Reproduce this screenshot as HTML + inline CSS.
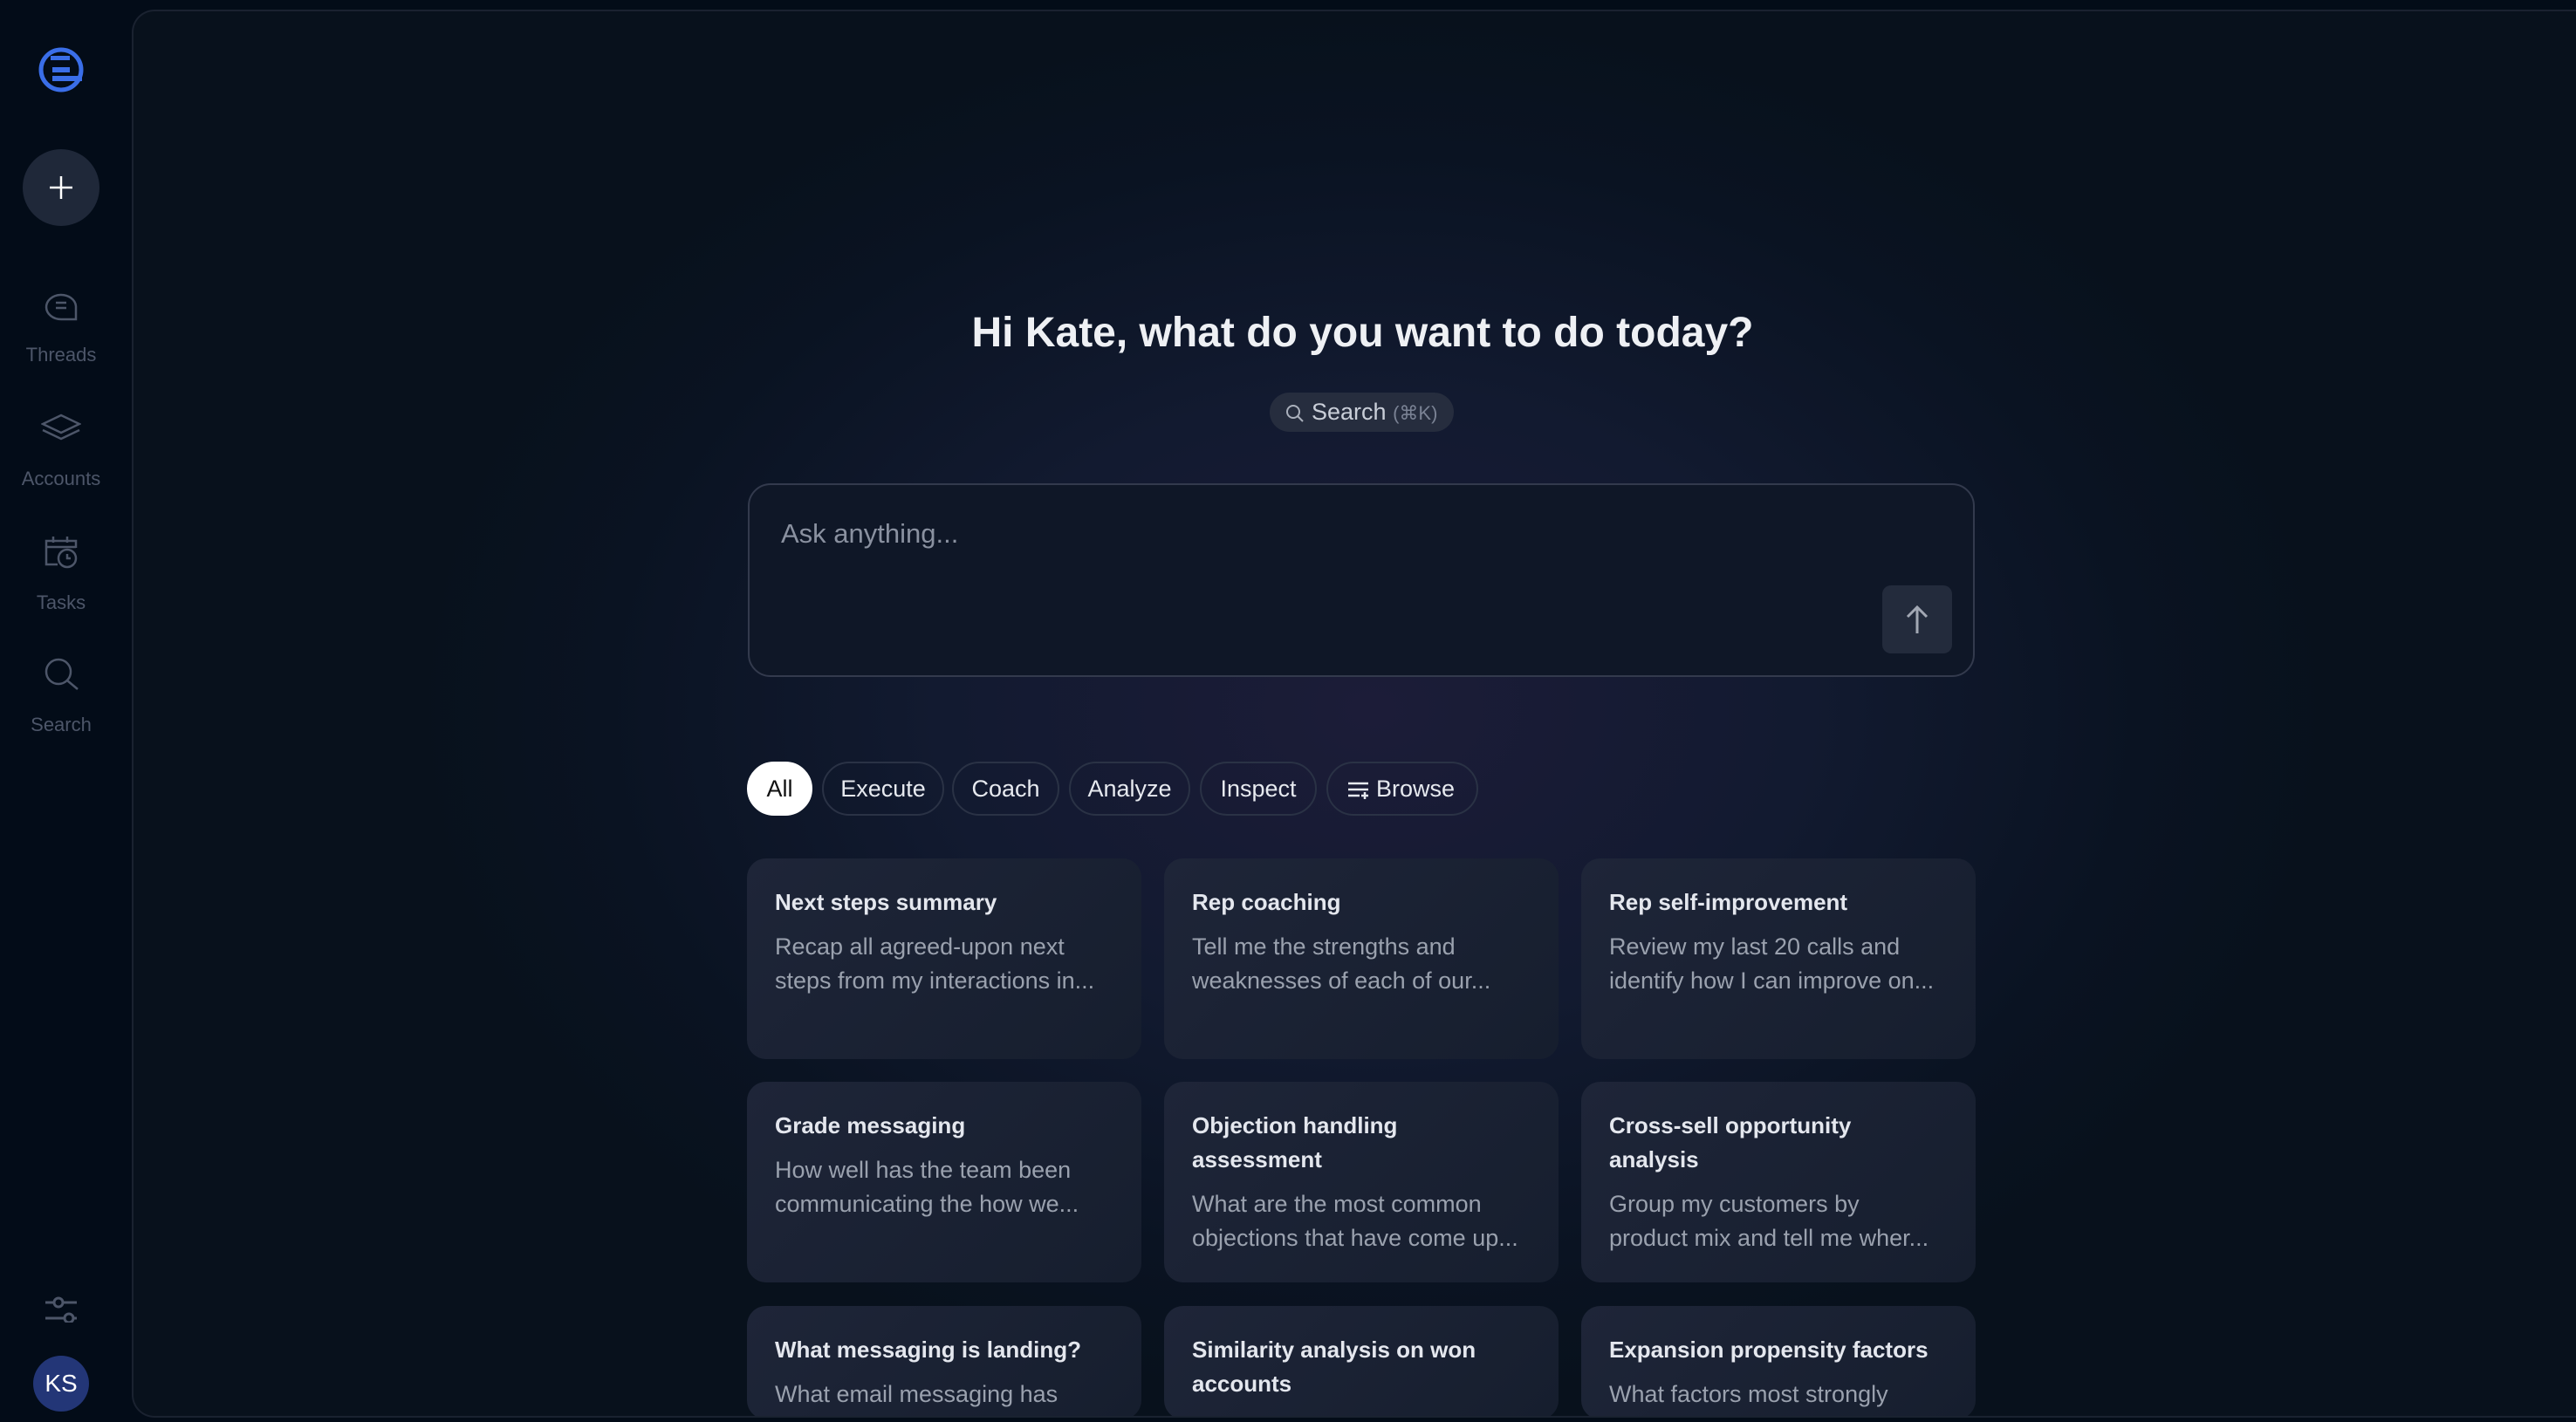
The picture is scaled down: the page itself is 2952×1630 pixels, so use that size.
<!DOCTYPE html>
<html><head><meta charset="utf-8"><style>
*{margin:0;padding:0;box-sizing:border-box}
html,body{width:2952px;height:1630px;overflow:hidden}
body{background:#030c18;font-family:"Liberation Sans",sans-serif;position:relative}
.side{position:absolute;left:0;top:0;width:151px;height:1630px}
.main{position:absolute;left:151px;top:11px;width:2801px;height:1614px;border:2px solid #1a2230;border-right:none;border-radius:26px 0 0 26px;overflow:hidden;
background:radial-gradient(ellipse 1100px 800px at 1420px 800px,#1c1c38 0%,#121a30 45%,#0a1322 80%,#08111c 100%)}
.nav{position:absolute;left:0;width:140px;text-align:center;color:#4d5669;font-size:22px}
.nav svg{display:block;margin:0 auto 24px}
h1{position:absolute;left:8px;width:2801px;top:341px;text-align:center;color:#eef0f4;font-size:48px;font-weight:600}
.sp{position:absolute;left:1302px;top:437px;width:211px;height:45px;border-radius:23px;background:#262d3e;color:#c9ced8;font-size:27px;line-height:45px;padding-left:48px}
.sp small{color:#7a8294;font-size:22px}
.in{position:absolute;left:704px;top:541px;width:1406px;height:222px;border:2px solid #333a4d;border-radius:26px;background:#0f1727}
.in .ph{position:absolute;left:36px;top:38px;color:#8a91a0;font-size:31px}
.send{position:absolute;right:24px;top:115px;width:80px;height:78px;border-radius:10px;background:#232b3c}
.chip{position:absolute;top:860px;height:62px;border:2px solid #2a3245;border-radius:31px;color:#e6e9ef;font-size:27px;line-height:58px;text-align:center}
.card{position:absolute;width:452px;height:230px;border-radius:22px;background:linear-gradient(135deg,#1e2538,#161e2e);padding:31px 40px 0 32px;overflow:hidden}
.card b{display:block;color:#e4e7ee;font-size:26px;font-weight:600;line-height:39px;margin-bottom:12px}
.card p{color:#9aa1ae;font-size:27px;line-height:39px}
</style></head><body>
<div class="side">
<svg style="position:absolute;left:42px;top:52px" width="56" height="56" viewBox="0 0 56 56"><circle cx="28" cy="28" r="23" fill="none" stroke="#3a6ee8" stroke-width="5"/><rect x="16" y="12" width="22" height="5" fill="#3a6ee8"/><rect x="18" y="25" width="20" height="6" fill="#3a6ee8"/><rect x="18" y="35" width="34" height="6" fill="#3a6ee8"/></svg>
<div style="position:absolute;left:26px;top:171px;width:88px;height:88px;border-radius:50%;background:#1f2839"></div>
<svg style="position:absolute;left:55px;top:200px" width="30" height="30"><path d="M15 2V28M2 15H28" stroke="#fff" stroke-width="2.5"/></svg>
<div class="nav" style="top:330px"><svg width="40" height="40" viewBox="0 0 40 40" fill="none" stroke="#4d5669" stroke-width="2.5"><path d="M37 36H20A17 14 0 1 1 37 21Z"/><path d="M14 17H26M14 23H26"/></svg>Threads</div>
<div class="nav" style="top:472px"><svg width="46" height="40" viewBox="0 0 46 40" fill="none" stroke="#4d5669" stroke-width="2.5"><path d="M23 4L44 14L23 24L2 14Z"/><path d="M2 21L23 31L44 21"/></svg>Accounts</div>
<div class="nav" style="top:612px"><svg width="40" height="42" viewBox="0 0 40 42" fill="none" stroke="#4d5669" stroke-width="2.5"><path d="M16 35H3V8H37V16M3 15H37M11 3V10M27 3V10"/><circle cx="27" cy="28" r="10"/><path d="M27 23V28H31"/></svg>Tasks</div>
<div class="nav" style="top:752px"><svg width="42" height="42" viewBox="0 0 42 42" fill="none" stroke="#4d5669" stroke-width="2.5"><circle cx="18" cy="18" r="14"/><path d="M28 28L40 38"/></svg>Search</div>
<svg style="position:absolute;left:52px;top:1486px" width="36" height="30" fill="none" stroke="#4d5669" stroke-width="3"><path d="M0 7H10M20 7H36M0 25H22M32 25H36"/><circle cx="15" cy="7" r="5"/><circle cx="27" cy="25" r="5"/></svg>
<div style="position:absolute;left:38px;top:1554px;width:64px;height:64px;border-radius:50%;background:#233677;color:#fff;font-size:28px;line-height:64px;text-align:center">KS</div>
</div>
<div class="main">
<h1>Hi Kate, what do you want to do today?</h1>
<div class="sp"><svg style="position:absolute;left:18px;top:13px" width="22" height="22" fill="none" stroke="#aab0bc" stroke-width="2"><circle cx="9" cy="9" r="7"/><path d="M14 14L20 20"/></svg>Search <small>(⌘K)</small></div>
<div class="in"><div class="ph">Ask anything...</div><div class="send"><svg style="position:absolute;left:25px;top:22px" width="30" height="34" fill="none" stroke="#a2a8b4" stroke-width="3"><path d="M15 33V3M4 14L15 3L26 14"/></svg></div></div>
<div class="chip" style="left:703px;width:75px;background:#fff;color:#111;border-color:#fff">All</div>
<div class="chip" style="left:789px;width:140px">Execute</div>
<div class="chip" style="left:938px;width:123px">Coach</div>
<div class="chip" style="left:1072px;width:139px">Analyze</div>
<div class="chip" style="left:1222px;width:134px">Inspect</div>
<div class="chip" style="left:1367px;width:174px;padding-left:30px"><svg style="position:absolute;left:22px;top:20px" width="26" height="22" fill="none" stroke="#e6e9ef" stroke-width="2.5"><path d="M1 3H24M1 10H24M1 17H14M20 13V21M16 17H24"/></svg>Browse</div>
<div class="card" style="left:703px;top:971px"><b>Next steps summary</b><p>Recap all agreed-upon next steps from my interactions in...</p></div>
<div class="card" style="left:1181px;top:971px"><b>Rep coaching</b><p>Tell me the strengths and weaknesses of each of our...</p></div>
<div class="card" style="left:1659px;top:971px"><b>Rep self-improvement</b><p>Review my last 20 calls and identify how I can improve on...</p></div>
<div class="card" style="left:703px;top:1227px"><b>Grade messaging</b><p>How well has the team been communicating the how we...</p></div>
<div class="card" style="left:1181px;top:1227px"><b>Objection handling assessment</b><p>What are the most common objections that have come up...</p></div>
<div class="card" style="left:1659px;top:1227px"><b>Cross-sell opportunity<br>analysis</b><p>Group my customers by product mix and tell me wher...</p></div>
<div class="card" style="left:703px;top:1484px;height:130px"><b>What messaging is landing?</b><p>What email messaging has</p></div>
<div class="card" style="left:1181px;top:1484px;height:130px"><b>Similarity analysis on won accounts</b></div>
<div class="card" style="left:1659px;top:1484px;height:130px"><b>Expansion propensity factors</b><p>What factors most strongly</p></div>
</div>
</body></html>
